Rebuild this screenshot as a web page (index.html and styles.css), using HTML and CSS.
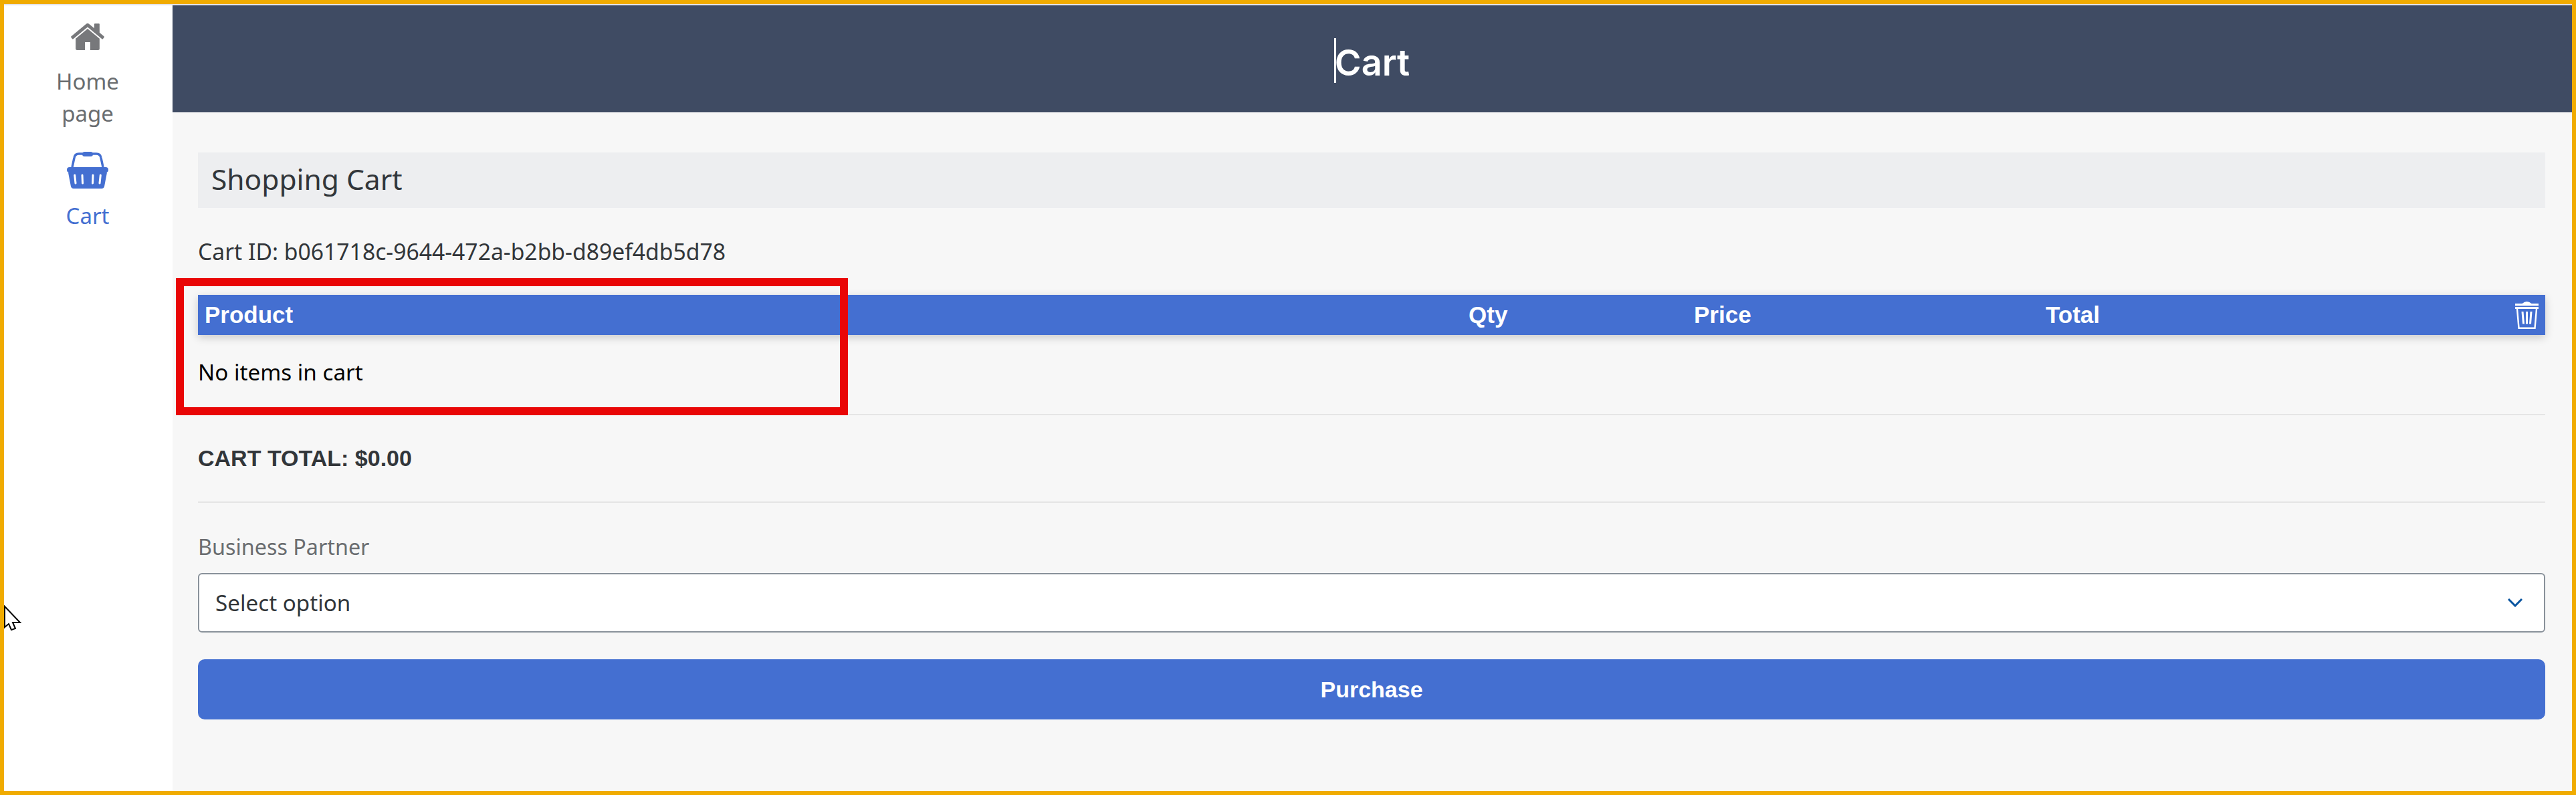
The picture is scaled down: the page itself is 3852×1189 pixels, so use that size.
FILE: index.html
```html
<!doctype html>
<html>
  <head>
    <title>Cart</title>
    <link rel="stylesheet" href="styles.css">
  </head>

  <body>
    <div class="frame">
      <nav class="sidebar">
        <a class="nav-item">
          <svg class="home-icon" viewBox="90 250 1612 1290">
            <path fill="#77787b" d="M1472 992v480q0 26-19 45t-45 19h-384v-384h-256v384h-384q-26 0-45-19t-19-45v-480q0-1 .5-3t.5-3l575-474 575 474q1 2 1 6zm223-69l-62 74q-8 9-21 11h-3q-13 0-21-7l-692-577-692 577q-12 8-24 7-13-2-21-11l-62-74q-8-10-7-23.500t11-21.500l719-599q32-26 76-26t76 26l244 204v-195q0-14 9-23t23-9h192q14 0 23 9t9 23v408l219 182q10 8 11 21.500t-7 23.500z" />
          </svg>
          <span>Home page</span>
        </a>
        <a class="nav-item active">
          <svg class="basket-icon" viewBox="0 0 62 56">
            <path d="M8 23 L11 9 Q12 3 18 3 H44 Q50 3 51 9 L54 23" fill="none" stroke="#446fd1" stroke-width="3.5" />
            <rect x="23" y="0" width="16" height="7" rx="3.5" fill="#446fd1" />
            <rect x="0" y="23" width="62" height="8" rx="4" fill="#446fd1" />
            <path d="M2 31 H60 L56 52 Q55 55 52 55 H10 Q7 55 6 52 Z" fill="#446fd1" />
            <path d="M11.700 35 L13 47 M23 35 L23.500 47 M39 35 L38.500 47 M50.300 35 L49 47" stroke="#fff" stroke-width="3" stroke-linecap="round" />
          </svg>
          <span>Cart</span>
        </a>
      </nav>

      <div class="page">
        <header class="page-header">
          <h1 class="page-title">Cart</h1>
        </header>

        <main class="content">
          <h2 class="section-title">Shopping Cart</h2>
          <p class="cart-id">Cart ID: b061718c-9644-472a-b2bb-d89ef4db5d78</p>

          <div class="table-head">
            <span>Product</span>
            <span>Qty</span>
            <span>Price</span>
            <span>Total</span>
            <svg class="trash-icon" viewBox="0 0 35 41">
              <path d="M10.500 3 Q14 0 17.500 0 Q21 0 24.500 3 Z" fill="#fff" />
              <rect x="0" y="3" width="35" height="3.300" fill="#fff" />
              <rect x="0" y="8" width="35" height="3" fill="#fff" />
              <path d="M3 11 L5.500 39.700 H29.500 L32 11" fill="none" stroke="#fff" stroke-width="2.400" />
              <path d="M11 15 L12.500 33.500 M17.500 15 V33.500 M24 15 L22.500 33.500" stroke="#fff" stroke-width="3" />
            </svg>
          </div>
          <p class="empty-row">No items in cart</p>
          <hr class="divider divider-first">

          <p class="cart-total">CART TOTAL: $0.00</p>
          <hr class="divider divider-second">

          <label class="field-label">Business Partner</label>
          <div class="select-box">
            <span>Select option</span>
            <svg class="chevron-icon" viewBox="0 0 22 13">
              <path d="M1 1 L11 11 L21 1" fill="none" stroke="#0854a0" stroke-width="3" />
            </svg>
          </div>
          <button type="button" class="purchase-btn">Purchase</button>
        </main>
      </div>

      <div class="callout"></div>
      <svg class="cursor" viewBox="0 0 30 66">
        <rect x="0" y="0" width="2" height="64" fill="#000" />
        <path d="M3 2 L26 26 L15 26 L19 35 L13 37 L9 28 L3 33 Z" fill="#fff" stroke="#000" stroke-width="2" />
      </svg>
    </div>
  </body>
</html>
```

FILE: styles.css
```css
/* CSS Reset */
*,
*::before,
*::after {
  box-sizing: border-box;
  margin: 0;
  padding: 0;
}

body {
  font-family: "Noto Sans", "Open Sans", sans-serif;
  color: #32363a;
  background-color: #fff;
}

.frame {
  position: relative;
  display: flex;
  height: 1189px;
  border: 6px solid #f0ab00;
  background-color: #fff;
  overflow: hidden;
}

.frame::before {
  content: "";
  position: absolute;
  top: 0;
  left: 0;
  right: 0;
  height: 2px;
  background-color: #e4e4e4;
}

/* Sidebar */
.sidebar {
  width: 252px;
  flex-shrink: 0;
  padding-top: 29px;
  background-color: #fff;
}

.nav-item {
  display: flex;
  flex-direction: column;
  align-items: center;
  padding: 0 40px 0 38px;
  font-size: 33px;
  line-height: 48px;
  text-align: center;
  color: #6a6d70;
}

.nav-item.active {
  margin-top: 33px;
  color: #446fd1;
}

.home-icon {
  width: 50px;
  height: 40px;
  margin-bottom: 23px;
}

.basket-icon {
  width: 62px;
  height: 56px;
  margin-bottom: 16px;
}

/* Main column */
.page {
  flex: 1;
  display: flex;
  flex-direction: column;
  background-color: #f7f7f7;
}

.page-header {
  height: 162px;
  padding-top: 14px;
  display: flex;
  align-items: center;
  justify-content: center;
  background-color: #3f4b63;
}

.page-title {
  position: relative;
  font-family: Inter, sans-serif;
  font-size: 54px;
  font-weight: 600;
  line-height: 68px;
  color: #fff;
}

.page-title::before {
  content: "";
  position: absolute;
  top: -3px;
  left: -1px;
  width: 3px;
  height: 67px;
  background-color: #fff;
}

.content {
  padding: 60px 40px 0 38px;
}

.section-title {
  height: 83px;
  padding-left: 20px;
  font-size: 42.500px;
  font-weight: 400;
  line-height: 79px;
  background-color: #edeef0;
}

.cart-id {
  margin: 41px 0;
  font-size: 33.700px;
  line-height: 48px;
}

.table-head {
  display: grid;
  grid-template-columns: 1890px 337px 526px 1fr auto;
  align-items: center;
  height: 60px;
  padding: 0 10px;
  font-family: "Liberation Sans", sans-serif;
  font-size: 35px;
  font-weight: 700;
  color: #fff;
  background-color: #446fd1;
  box-shadow: 0 4px 12px rgba(0, 0, 0, 0.18);
}

.trash-icon {
  width: 35px;
  height: 41px;
}

.empty-row {
  margin: 32px 0 38px;
  font-size: 33.200px;
  line-height: 48px;
  color: #000;
}

.divider {
  height: 2px;
  border: none;
  background-color: #e5e5e5;
}

.cart-total {
  margin: 40px 0 41px;
  font-family: "Liberation Sans", sans-serif;
  font-size: 34px;
  font-weight: 700;
  line-height: 48px;
}

.field-label {
  display: block;
  margin-top: 41px;
  font-size: 32.300px;
  line-height: 48px;
  color: #6a6d70;
}

.select-box {
  display: flex;
  align-items: center;
  justify-content: space-between;
  height: 89px;
  margin-top: 16px;
  padding: 0 32px 0 24px;
  font-size: 33.200px;
  background-color: #fff;
  border: 2px solid #89919a;
  border-radius: 6px;
}

.chevron-icon {
  width: 22px;
  height: 13px;
}

.purchase-btn {
  display: block;
  width: 100%;
  height: 90px;
  margin-top: 40px;
  font-family: "Liberation Sans", sans-serif;
  font-size: 34px;
  font-weight: 700;
  color: #fff;
  background-color: #446fd1;
  border: none;
  border-radius: 10px;
}

/* Annotations drawn over the screenshot */
.callout {
  position: absolute;
  top: 410px;
  left: 257px;
  width: 1005px;
  height: 205px;
  border: 12px solid #e90606;
}

.cursor {
  position: absolute;
  top: 899px;
  left: -2px;
  width: 30px;
  height: 66px;
}
```
